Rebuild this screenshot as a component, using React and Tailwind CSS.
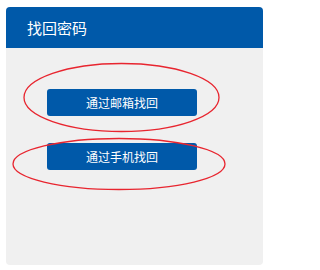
export default function App() {
  return (
    <div className="relative h-[270px] w-[271px] bg-white px-[6px] pt-[7px] font-['Noto_Sans_CJK_SC','Microsoft_YaHei',sans-serif]">
      <div className="w-[257px] overflow-hidden rounded-[4px] bg-[#f0f0f0]">
        {/* Header */}
        <div className="flex h-[41px] items-center bg-[#0059a9] pl-[21px]">
          <h2 className="text-[15px] leading-none text-white">找回密码</h2>
        </div>

        {/* Options */}
        <div className="flex h-[217px] flex-col gap-[27px] pl-[41px] pt-[41px]">
          <button className="flex h-[27px] w-[150px] items-center justify-center rounded-[3px] bg-[#0059a9] text-[12px] text-white">
            通过邮箱找回
          </button>
          <button className="flex h-[27px] w-[150px] items-center justify-center rounded-[3px] bg-[#0059a9] text-[12px] text-white">
            通过手机找回
          </button>
        </div>
      </div>

      {/* Red annotation marks */}
      <svg className="pointer-events-none absolute left-0 top-0" width="271" height="270">
        <ellipse cx="121.5" cy="97.5" rx="97.5" ry="34" fill="none" stroke="#e8252f" strokeWidth="1.3" />
        <ellipse cx="119" cy="164" rx="106" ry="25.5" fill="none" stroke="#e8252f" strokeWidth="1.3" />
      </svg>
    </div>
  );
}
